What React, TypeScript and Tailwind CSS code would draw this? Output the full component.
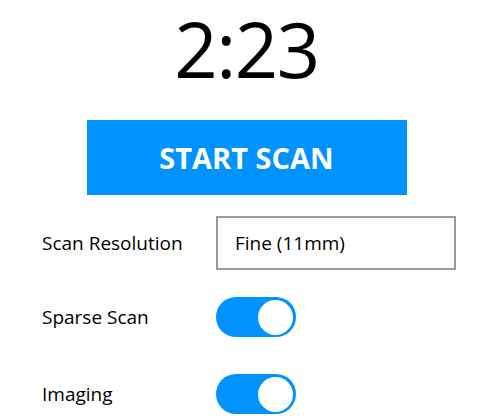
import React from 'react';

function Toggle({ on }: { on: boolean }) {
  return (
    <div
      className={`w-[80px] h-[40px] rounded-full flex items-center px-[3px] ${
        on ? 'bg-[#0092ff] justify-end' : 'bg-gray-300 justify-start'
      }`}
    >
      <div className="w-[35px] h-[35px] rounded-full bg-white" />
    </div>
  );
}

export default function App() {
  const [sparse] = React.useState(true);
  const [imaging] = React.useState(true);

  return (
    <div className="w-[493px] h-[420px] bg-white flex flex-col items-center text-black font-['Open_Sans',sans-serif] overflow-hidden">
      <div className="pt-[1px] text-[76px] leading-[96px] tracking-[-1.5px]">2:23</div>

      <button className="mt-[23px] w-[320px] h-[75px] bg-[#0092ff] text-white font-bold text-[29px]">
        START SCAN
      </button>

      <div className="self-stretch pl-[42px] mt-[21px] flex flex-col text-[19px]">
        <div className="flex items-center h-[54px]">
          <div className="w-[174px]">Scan Resolution</div>
          <div className="w-[240px] h-[54px] border-2 border-[#999999] flex items-center pl-[17px]">
            Fine (11mm)
          </div>
        </div>

        <div className="flex items-center h-[40px] mt-[27px]">
          <div className="w-[174px]">Sparse Scan</div>
          <Toggle on={sparse} />
        </div>

        <div className="flex items-center h-[40px] mt-[37px]">
          <div className="w-[174px]">Imaging</div>
          <Toggle on={imaging} />
        </div>
      </div>
    </div>
  );
}
